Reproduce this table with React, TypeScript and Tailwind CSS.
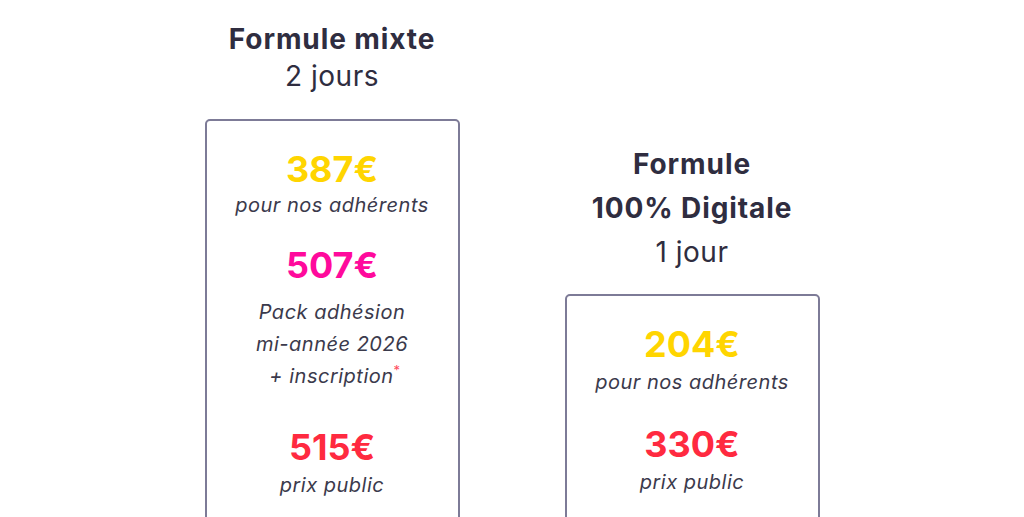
import React from "react";

function Price({ value, color }: { value: string; color: string }) {
  return (
    <div className={`text-[36px] leading-[40px] font-bold ${color}`}>
      {value}
    </div>
  );
}

function Desc({ children, className = "" }: { children: React.ReactNode; className?: string }) {
  return (
    <div
      className={`italic text-[20px] leading-[32px] tracking-[0.5px] text-[#3b3a4c] ${className}`}
    >
      {children}
    </div>
  );
}

export default function App() {
  return (
    <div
      className="w-[1024px] h-[517px] overflow-hidden bg-white text-[#2f2d40]"
      style={{ fontFamily: "Inter, 'Noto Sans', sans-serif" }}
    >
      <div className="flex justify-center items-start gap-[105px]">
        {/* Left column */}
        <div className="w-[255px] flex flex-col items-center pt-[21px]">
          <div className="text-center text-[28px] leading-[37px]">
            <div className="font-bold tracking-[0.9px]">Formule mixte</div>
            <div className="font-normal tracking-[0.5px]">2 jours</div>
          </div>
          <div className="mt-[24px] w-full h-[420px] border-2 border-[#7d7b97] rounded-[5px] flex flex-col items-center pt-[28px] text-center">
            <Price value="387€" color="text-[#ffd500]" />
            <Desc>pour nos adhérents</Desc>
            <div className="mt-[24px]">
              <Price value="507€" color="text-[#ff0a9c]" />
            </div>
            <Desc className="mt-[11px]">
              Pack adhésion
              <br />
              mi-année 2026
              <br />
              <span className="pl-[6px]">+ inscription</span>
              <span className="relative top-[-8px] text-[13px] not-italic text-[#ff4a5c]">*</span>
            </Desc>
            <div className="mt-[33px]">
              <Price value="515€" color="text-[#ff2a40]" />
            </div>
            <Desc className="mt-[2px]">prix public</Desc>
          </div>
        </div>

        {/* Right column */}
        <div className="w-[255px] flex flex-col items-center pt-[142px]">
          <div className="text-center text-[28px] leading-[44px]">
            <div className="font-bold tracking-[0.9px]">Formule</div>
            <div className="font-bold tracking-[0.9px]">100% Digitale</div>
            <div className="font-normal tracking-[0.5px]">1 jour</div>
          </div>
          <div className="mt-[20px] w-full h-[250px] border-2 border-[#7d7b97] rounded-[5px] flex flex-col items-center pt-[28px] text-center">
            <Price value="204€" color="text-[#ffd500]" />
            <Desc className="mt-[2px]">pour nos adhérents</Desc>
            <div className="mt-[26px]">
              <Price value="330€" color="text-[#ff2a40]" />
            </div>
            <Desc className="mt-[2px]">prix public</Desc>
          </div>
        </div>
      </div>
    </div>
  );
}
